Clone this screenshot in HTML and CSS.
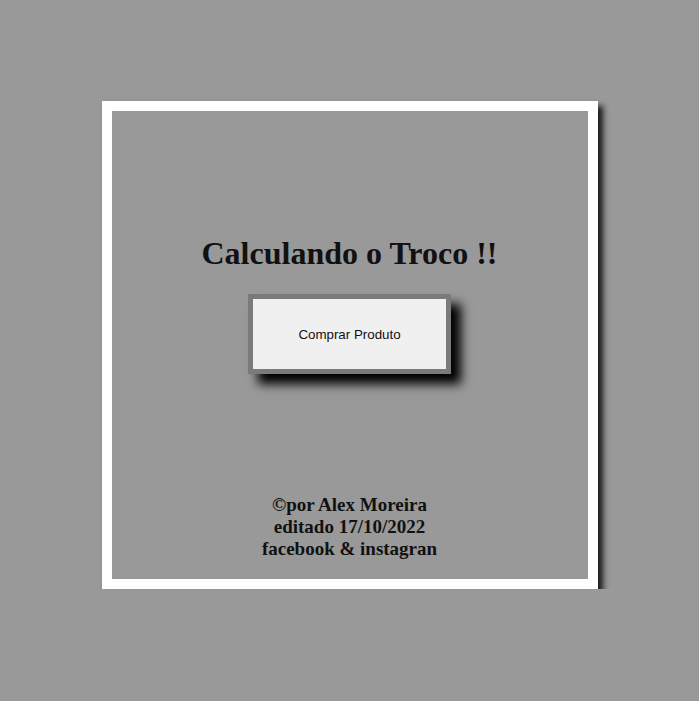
FILE: index.html
```html
<!DOCTYPE html>
<html lang="pt-BR">
<head>
<meta charset="utf-8">
<title>Calculando o Troco</title>
<link rel="stylesheet" href="styles.css">
</head>
<body>
<main class="frame">
  <h1 class="title">Calculando o Troco !!</h1>
  <button class="buy" type="button">Comprar Produto</button>
  <footer class="credits">
    <p>©por Alex Moreira</p>
    <p>editado 17/10/2022</p>
    <p>facebook &amp; instagran</p>
  </footer>
</main>
</body>
</html>
```
FILE: styles.css
```css
html, body {
  margin: 0;
  padding: 0;
  background: #999999;
}
body {
  display: flex;
  justify-content: center;
  padding-top: 101px;
  font-family: "Liberation Serif", "Times New Roman", serif;
  color: #111;
}
.frame {
  box-sizing: border-box;
  width: 496px;
  height: 488px;
  border: 10px solid #ffffff;
  background: #999999;
  box-shadow: 5px 5px 6px rgba(0, 0, 0, 0.85);
  display: flex;
  flex-direction: column;
  align-items: center;
  padding-top: 123px;
}
.title {
  margin: 0;
  font-size: 32px;
  font-weight: bold;
  line-height: 38px;
}
.buy {
  margin-top: 22px;
  width: 203px;
  height: 80px;
  box-sizing: border-box;
  border: 5px solid #7a7a7a;
  background: #f0f0f0;
  font-family: "Liberation Sans", Arial, sans-serif;
  font-size: 13.333px;
  color: #111;
  box-shadow: 10px 10px 10px #000;
  padding: 0;
}
.credits {
  margin-top: 120px;
  text-align: center;
  font-size: 19px;
  font-weight: bold;
  line-height: 22px;
}
.credits p {
  margin: 0;
}
```
